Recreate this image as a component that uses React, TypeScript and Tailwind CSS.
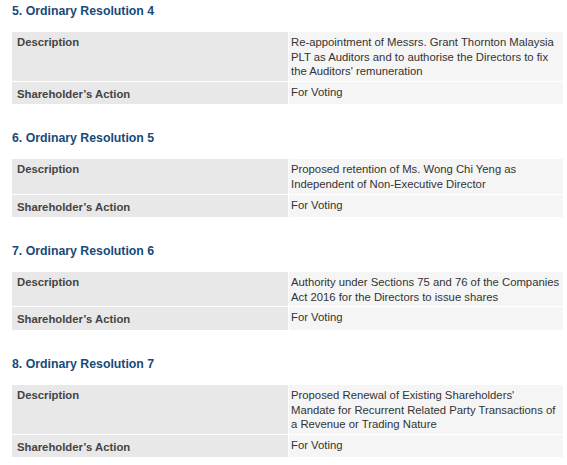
import React from 'react';

interface Resolution {
  title: string;
  lines: string[];
  action: string;
}

const resolutions: Resolution[] = [
  {
    title: '5. Ordinary Resolution 4',
    lines: [
      'Re-appointment of Messrs. Grant Thornton Malaysia',
      'PLT as Auditors and to authorise the Directors to fix',
      "the Auditors' remuneration",
    ],
    action: 'For Voting',
  },
  {
    title: '6. Ordinary Resolution 5',
    lines: ['Proposed retention of Ms. Wong Chi Yeng as', 'Independent of Non-Executive Director'],
    action: 'For Voting',
  },
  {
    title: '7. Ordinary Resolution 6',
    lines: ['Authority under Sections 75 and 76 of the Companies', 'Act 2016 for the Directors to issue shares'],
    action: 'For Voting',
  },
  {
    title: '8. Ordinary Resolution 7',
    lines: [
      "Proposed Renewal of Existing Shareholders'",
      'Mandate for Recurrent Related Party Transactions of',
      'a Revenue or Trading Nature',
    ],
    action: 'For Voting',
  },
];

const ResolutionTable: React.FC<{ item: Resolution; first: boolean }> = ({ item, first }) => (
  <section>
    <h3
      className={`text-[12.3px] leading-[15px] font-bold text-[#174a7c] mb-[13px] ${first ? 'mt-0' : 'mt-[27px]'}`}
    >
      {item.title}
    </h3>
    <div className="grid grid-cols-[276px_274px] gap-px bg-white">
      <div className="bg-[#e8e8e8] px-[5px] pt-[3px] pb-[2px] font-bold text-[#444]">Description</div>
      <div className="bg-[#f5f5f5] pl-[2px] pt-[3px] pb-[2px] text-[#333]">
        {item.lines.map((line) => (
          <div key={line} className="whitespace-nowrap">
            {line}
          </div>
        ))}
      </div>
      <div className="bg-[#e8e8e8] px-[5px] pt-[5px] pb-[3px] font-bold text-[#444]">Shareholder’s Action</div>
      <div className="bg-[#f5f5f5] pl-[2px] pt-[3px] pb-[2px] text-[#333]">{item.action}</div>
    </div>
  </section>
);

export default function App() {
  return (
    <div className="min-h-screen bg-white pl-[12px] pt-[4px] font-['Liberation_Sans',Arial,sans-serif] text-[11.3px] leading-[14.6px]">
      <div className="w-[551px]">
        {resolutions.map((r, i) => (
          <ResolutionTable key={r.title} item={r} first={i === 0} />
        ))}
      </div>
    </div>
  );
}
